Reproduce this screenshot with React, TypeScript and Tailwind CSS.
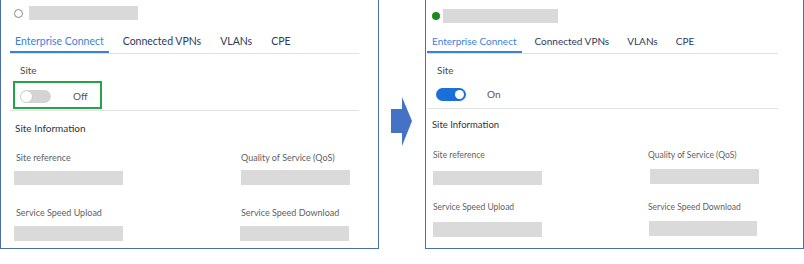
type FieldProps = {
  label: string;
  labelClass: string;
  boxClass: string;
};

const Field = ({ label, labelClass, boxClass }: FieldProps) => (
  <div className="flex flex-col">
    <span className={labelClass}>{label}</span>
    <span className={boxClass} />
  </div>
);

const Toggle = ({ on }: { on: boolean }) =>
  on ? (
    <span className="flex h-[13px] w-[30px] items-center justify-end rounded-full bg-[#1b6fd8] pr-[2px]">
      <span className="h-[9px] w-[9px] rounded-full bg-white" />
    </span>
  ) : (
    <span className="flex h-[13px] w-[31px] items-center rounded-full bg-[#d4d4d4] pl-[1px]">
      <span className="h-[11px] w-[11px] rounded-full bg-white shadow-[0_0_0_0.5px_#c4c4c4]" />
    </span>
  );

const tabs = ["Connected VPNs", "VLANs", "CPE"];

const Panel = ({ on }: { on: boolean }) => {
  const labelText = on
    ? "text-[8.5px] leading-[14px] text-[#5f5f5f]"
    : "text-[9px] leading-[14px] text-[#5f5f5f]";
  return (
    <div
      className={
        on
          ? "flex h-[249px] w-[379px] flex-col border-x border-b border-[#4a6fae] bg-white pl-[1px]"
          : "flex h-[249px] w-[379px] flex-col border-x border-b border-[#4a6fae] bg-white pl-[9px]"
      }
    >
      {/* header */}
      {on ? (
        <div className="flex items-center gap-[3px] pl-[5px] pt-[9px]">
          <span className="h-[8px] w-[8px] rounded-full bg-[#1e8a1e]" />
          <span className="h-[14px] w-[115px] bg-[#d9d9d9]" />
        </div>
      ) : (
        <div className="flex items-center gap-[6px] pl-[4px] pt-[6px]">
          <span className="h-[9px] w-[9px] rounded-full border border-[#8a8a8a]" />
          <span className="h-[14px] w-[109px] bg-[#d9d9d9]" />
        </div>
      )}

      {/* tabs */}
      <div
        className={
          on
            ? "mt-[9px] flex w-[351px] gap-[8px] border-b border-[#e3e3e3] text-[10px]"
            : "mt-[12px] flex w-[349px] gap-[9px] border-b border-[#e3e3e3] text-[10.5px]"
        }
      >
        <span className="flex h-[21px] items-center border-b-2 border-[#3b7fe0] px-[5px] text-[#3b7fe0]">
          Enterprise Connect
        </span>
        {tabs.map((t) => (
          <span
            key={t}
            className="flex h-[21px] items-center border-b-2 border-transparent px-[5px] text-[#2b3a60]"
          >
            {t}
          </span>
        ))}
      </div>

      <span className="mt-[9px] pl-[10px] text-[10px] leading-[14px] text-[#4a4a4a]">Site</span>

      {on ? (
        <div className="mt-[4px] flex h-[27px] items-center gap-[21px] pl-[9px]">
          <Toggle on />
          <span className="text-[10px] text-[#555]">On</span>
        </div>
      ) : (
        <div className="ml-[3px] mt-[4px] flex h-[28px] w-[89px] items-center gap-[22px] border-2 border-[#22a447] pl-[5px] pt-[3px]">
          <Toggle on={false} />
          <span className="text-[10px] text-[#555]">Off</span>
        </div>
      )}

      <div className={on ? "h-px w-[351px] bg-[#e3e3e3]" : "mt-[1px] h-px w-[349px] bg-[#e3e3e3]"} />

      <span
        className={
          on
            ? "mt-[9px] pl-[5px] text-[9.5px] leading-[14px] text-[#333]"
            : "mt-[10px] pl-[5px] text-[10px] leading-[14px] text-[#333]"
        }
      >
        Site Information
      </span>

      {on ? (
        <>
          <div className="mt-[16px] flex">
            <div className="w-[221px]">
              <Field label="Site reference" labelClass={`pl-[6px] ${labelText}`} boxClass="ml-[6px] mt-[9px] h-[14px] w-[109px] bg-[#dadada]" />
            </div>
            <Field label="Quality of Service (QoS)" labelClass={labelText} boxClass="ml-[2px] mt-[7px] h-[15px] w-[109px] bg-[#dadada]" />
          </div>
          <div className="mt-[15px] flex">
            <div className="w-[221px]">
              <Field label="Service Speed Upload" labelClass={`pl-[6px] ${labelText}`} boxClass="ml-[6px] mt-[8px] h-[15px] w-[109px] bg-[#dadada]" />
            </div>
            <Field label="Service Speed Download" labelClass={labelText} boxClass="ml-[1px] mt-[7px] h-[15px] w-[108px] bg-[#dadada]" />
          </div>
        </>
      ) : (
        <>
          <div className="mt-[16px] flex">
            <div className="w-[231px]">
              <Field label="Site reference" labelClass={`pl-[6px] ${labelText}`} boxClass="ml-[4px] mt-[6px] h-[14px] w-[109px] bg-[#dadada]" />
            </div>
            <Field label="Quality of Service (QoS)" labelClass={labelText} boxClass="mt-[5px] h-[15px] w-[109px] bg-[#dadada]" />
          </div>
          <div className="mt-[21px] flex">
            <div className="w-[231px]">
              <Field label="Service Speed Upload" labelClass={`pl-[6px] ${labelText}`} boxClass="ml-[4px] mt-[6px] h-[15px] w-[109px] bg-[#dadada]" />
            </div>
            <Field label="Service Speed Download" labelClass={labelText} boxClass="-ml-px mt-[6px] h-[15px] w-[109px] bg-[#dadada]" />
          </div>
        </>
      )}
    </div>
  );
};

export default function App() {
  return (
    <div className="flex h-[264px] w-[804px] bg-white font-['Lato',sans-serif]">
      <Panel on={false} />
      <div className="w-[46px] pl-[12px] pt-[97px]">
        <svg width="22" height="50" viewBox="0 0 22 50">
          <polygon points="0,12 11,12 11,0 21,24 11,49 11,36 0,36" fill="#4472c4" />
        </svg>
      </div>
      <Panel on />
    </div>
  );
}
